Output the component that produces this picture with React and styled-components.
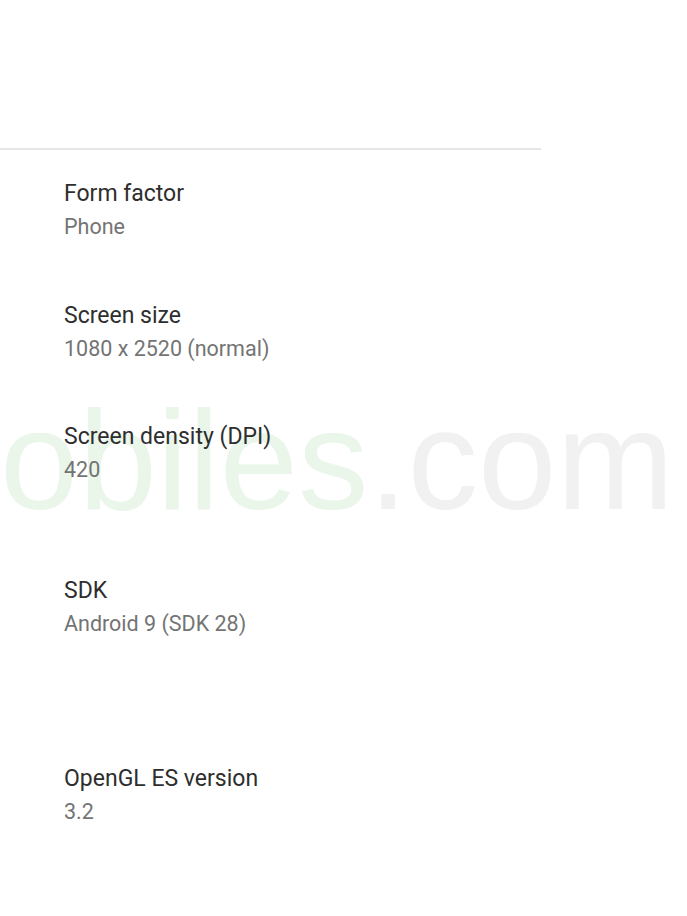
import React from 'react'
import styled, { createGlobalStyle } from 'styled-components'

const GlobalStyle = createGlobalStyle`
  html, body {
    margin: 0;
    padding: 0;
    background: #ffffff;
  }
  body {
    font-family: Roboto, "Noto Sans", "Liberation Sans", sans-serif;
  }
`

const SPECS = [
  { title: 'Form factor', value: 'Phone', gap: 27 },
  { title: 'Screen size', value: '1080 x 2520 (normal)', gap: 56 },
  { title: 'Screen density (DPI)', value: '420', gap: 55 },
  { title: 'SDK', value: 'Android 9 (SDK 28)', gap: 88 },
  { title: 'OpenGL ES version', value: '3.2', gap: 122 },
]

const App = () => (
  <Page>
    <GlobalStyle />
    <Divider />
    <List>
      {SPECS.map(s => (
        <Item key={s.title} gap={s.gap}>
          <Title>{s.title}</Title>
          <Value>{s.value}</Value>
        </Item>
      ))}
    </List>
    <Watermark aria-hidden="true">
      <Green>obiles</Green>.com
    </Watermark>
  </Page>
)

const Page = styled.div`
  position: relative;
  width: 687px;
  height: 916px;
  overflow: hidden;
  padding-top: 148px;
  box-sizing: border-box;
`
const Divider = styled.div`
  width: 541px;
  height: 2px;
  background: #e6e6e6;
`
const List = styled.div`
  display: flex;
  flex-direction: column;
  padding-left: 64px;
  position: relative;
  z-index: 1;
`
const Item = styled.div`
  margin-top: ${p => p.gap}px;
  display: flex;
  flex-direction: column;
`
const Title = styled.div`
  font-size: 23px;
  line-height: 33px;
  color: #2e2e2e;
`
const Value = styled.div`
  font-size: 21.5px;
  line-height: 33px;
  color: #747474;
`
const Watermark = styled.div`
  position: absolute;
  left: 0;
  top: 380px;
  font-family: "Liberation Sans", Arial, sans-serif;
  font-size: 141px;
  line-height: 160px;
  color: #f1f1f1;
  white-space: nowrap;
  z-index: 0;
  pointer-events: none;
`
const Green = styled.span`
  color: #e9f6e9;
`

export default App
